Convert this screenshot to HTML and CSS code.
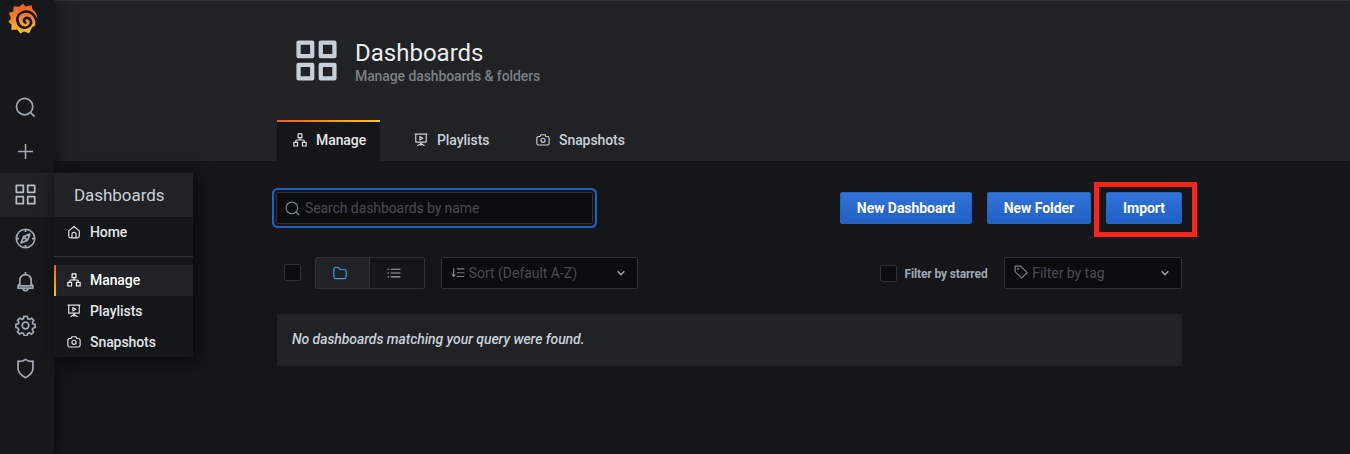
FILE: index.html
```html
<!DOCTYPE html>
<html lang="en">
<head>
<meta charset="utf-8">
<title>Dashboards</title>
<link rel="stylesheet" href="styles.css">
</head>
<body>
<svg class="defs" aria-hidden="true">
  <symbol id="search" viewBox="0 0 24 24"><circle cx="11" cy="11" r="9.300"/><path d="M17.500 17.500l5 5"/></symbol>
  <symbol id="plus" viewBox="0 0 24 24"><path d="M12 2.500v19M2.500 12h19"/></symbol>
  <symbol id="apps" viewBox="0 0 24 24"><path d="M1.500 1.500h8v8h-8zM14.500 1.500h8v8h-8zM1.500 14.500h8v8h-8zM14.500 14.500h8v8h-8z"/></symbol>
  <symbol id="compass" viewBox="0 0 24 24"><circle cx="12" cy="12" r="10.500"/><path d="M17 7l-2.800 7.200L7 17l2.800-7.200zM9.800 9.800l4.400 4.400M12 1.500v3M12 19.500v3M1.500 12h3M19.500 12h3"/></symbol>
  <symbol id="bell" viewBox="0 0 24 24"><path d="M12 1v3M5.500 17v-6.500a6.500 6.500 0 0 1 13 0V17M5.500 14.500L3.500 17v2.500h17V17l-2-2.500M3.500 17h17M9 19.500c.5 4 5.500 4 6 0"/></symbol>
  <symbol id="cog" viewBox="0 0 24 24"><circle cx="12" cy="12" r="3.800"/><path d="M10 1.500h4l.7 2.900 1.600.7 2.600-1.500 2.500 2.500-1.500 2.600.7 1.600 2.400.5v3.500l-2.500.8-.7 1.700 1.500 2.500-2.500 2.600-2.500-1.500-1.700.7-.7 2.400h-3.500l-.8-2.500-1.700-.7-2.500 1.500-2.600-2.500 1.500-2.500-.7-1.700-2.600-.8v-3.600l2.700-.5.700-1.600-1.500-2.600 2.500-2.500 2.600 1.500 1.600-.7z"/></symbol>
  <symbol id="shield" viewBox="0 0 24 24"><path d="M12 1.500c2.500 2 5.500 2.600 8.500 2.200V12c0 5-4 8-8.500 10.500C7.500 20 3.500 17 3.500 12V3.700C6.500 4.100 9.500 3.500 12 1.500z"/></symbol>
  <symbol id="home" viewBox="0 0 24 24"><path d="M3 10l9-7.500 9 7.500v9a3 3 0 0 1-3 3H6a3 3 0 0 1-3-3zM8.500 22v-6a3.500 3.500 0 0 1 7 0v6"/></symbol>
  <symbol id="sitemap" viewBox="0 0 24 24"><path d="M8.700 1.500h6.600V8H8.700zM1.500 16h6.300v6.300H1.500zM16.200 16h6.300v6.300h-6.300zM12 8v4M4.700 16v-2q0-2 2-2h10.600q2 0 2 2v2"/></symbol>
  <symbol id="play" viewBox="0 0 24 24"><path d="M1 2h22M3 2v13.500h18V2M12 15.500V22M6 22l6-4 6 4M10 6l5 3-5 3z"/></symbol>
  <symbol id="camera" viewBox="0 0 24 24"><path d="M4.500 6H7l1.500-3h7L17 6h2.500a3 3 0 0 1 3 3v8.500a3 3 0 0 1-3 3h-15a3 3 0 0 1-3-3V9a3 3 0 0 1 3-3z"/><circle cx="12" cy="12.500" r="3.500"/></symbol>
  <symbol id="folder" viewBox="0 0 24 24"><path d="M4 2.500h5.500L12 6h7.500a3 3 0 0 1 3 3v9.500a3 3 0 0 1-3 3h-15a3 3 0 0 1-3-3V5.500a3 3 0 0 1 2.500-3z"/></symbol>
  <symbol id="list" viewBox="0 0 24 24"><path d="M6.500 5.500H23M6.500 12H23M6.500 18.500H23M1 5.500h2.500M1 12h2.500M1 18.500h2.500"/></symbol>
  <symbol id="sort" viewBox="0 0 24 24"><path d="M10 5H23M10 11.500H23M10 18H23M4.500 4v14M1.500 14.500l3 3.500 3-3.500"/></symbol>
  <symbol id="tag" viewBox="0 0 24 24"><path d="M2 2h9.500L22.500 13 13 22.500 2 11.500z"/><circle cx="7" cy="7" r=".7"/></symbol>
  <symbol id="down" viewBox="0 0 24 24"><path d="M4 8l8 8 8-8"/></symbol>
  <linearGradient id="flame" x1="0" y1="0" x2="0" y2="1"><stop offset="0" stop-color="#f05a2c"/><stop offset=".5" stop-color="#f48530"/><stop offset="1" stop-color="#fbc824"/></linearGradient>
</svg>

<div class="app">
  <nav class="sidebar">
    <a class="logo"><svg viewBox="0 0 90 92">
      <path fill="url(#flame)" d="M45 1l8 9 18-4 2 12q13 9 15 25l-3 6-4 19-9 5-9 17-15-5-11 6-9-11-18 0 1-15L1 56l8-9-6-18 13-4 1-16 17 2z"/>
      <path class="swirl" d="M87 62C84 31 64 24 52 25 35 27 27 39 28 52 30 68 43 76 55 73 67 71 72 59 67 50 63 43 53 42 49 48 46 54 50 59 55 57"/>
    </svg></a>
    <a class="side-item"><svg class="icon"><use href="#search"/></svg></a>
    <a class="side-item"><svg class="icon small"><use href="#plus"/></svg></a>
    <a class="side-item active"><svg class="icon"><use href="#apps"/></svg></a>
    <a class="side-item"><svg class="icon"><use href="#compass"/></svg></a>
    <a class="side-item"><svg class="icon"><use href="#bell"/></svg></a>
    <a class="side-item"><svg class="icon"><use href="#cog"/></svg></a>
    <a class="side-item"><svg class="icon"><use href="#shield"/></svg></a>
    <div class="flyout">
      <div class="flyout-title">Dashboards</div>
      <a class="flyout-item"><svg class="icon"><use href="#home"/></svg>Home</a>
      <div class="divider"></div>
      <a class="flyout-item current"><svg class="icon"><use href="#sitemap"/></svg>Manage</a>
      <a class="flyout-item"><svg class="icon"><use href="#play"/></svg>Playlists</a>
      <a class="flyout-item"><svg class="icon"><use href="#camera"/></svg>Snapshots</a>
    </div>
  </nav>
  <main class="main">
    <header class="page-header">
      <div class="heading">
        <svg class="icon heading-icon"><use href="#apps"/></svg>
        <div><h1 class="title">Dashboards</h1><div class="subtitle">Manage dashboards &amp; folders</div></div>
      </div>
      <div class="tabs">
        <a class="tab selected"><svg class="icon"><use href="#sitemap"/></svg>Manage</a>
        <a class="tab playlists"><svg class="icon"><use href="#play"/></svg>Playlists</a>
        <a class="tab"><svg class="icon"><use href="#camera"/></svg>Snapshots</a>
      </div>
    </header>
    <section class="content">
      <div class="toolbar">
        <label class="search"><svg class="icon"><use href="#search"/></svg><span>Search dashboards by name</span></label>
        <div class="actions">
          <button class="button new-dashboard">New Dashboard</button>
          <button class="button new-folder">New Folder</button>
          <div class="highlight"><button class="button import">Import</button></div>
        </div>
      </div>
      <div class="filters">
        <span class="checkbox"></span>
        <div class="layout-switch">
          <span class="switch on"><svg class="icon"><use href="#folder"/></svg></span>
          <span class="switch"><svg class="icon"><use href="#list"/></svg></span>
        </div>
        <div class="select sort"><svg class="icon"><use href="#sort"/></svg><span>Sort (Default A-Z)</span><svg class="icon arrow"><use href="#down"/></svg></div>
        <span class="checkbox starred-box"></span>
        <span class="starred">Filter by starred</span>
        <div class="select tags"><svg class="icon tag-icon"><use href="#tag"/></svg><span>Filter by tag</span><svg class="icon arrow"><use href="#down"/></svg></div>
      </div>
      <div class="empty">No dashboards matching your query were found.</div>
    </section>
  </main>
</div>
</body>
</html>
```
FILE: styles.css
```css
* { box-sizing: border-box; }
body { margin: 0; background: #141619; color: #c7d0d9; font: 14px/20px Roboto, sans-serif; letter-spacing: -.07px; }
.defs { position: absolute; width: 0; height: 0; }
.app { display: flex; width: 1350px; height: 454px; overflow: hidden; }
.icon { display: block; flex: none; width: 14px; height: 14px; fill: none; stroke: currentColor; stroke-width: 2; stroke-linejoin: round; }

.sidebar { position: relative; z-index: 1; flex: none; width: 54px; background: #17181c; box-shadow: 0 0 16px #0b0c0e; }
.logo { display: block; height: 86px; padding: 3px 0 0 8px; }
.logo svg { display: block; width: 30px; height: 31px; }
.swirl { fill: none; stroke: #17181c; stroke-width: 8; }
.side-item { display: flex; align-items: center; height: 43.5px; padding-left: 15px; color: #9fa7b3; }
.side-item .icon { width: 21px; height: 21px; }
.side-item .small { width: 19px; height: 19px; margin-left: 1px; }
.side-item.active { background: #202226; color: #b4bcc7; }
.flyout { position: absolute; left: 54px; top: 173px; width: 139px; height: 184px; background: #141619; box-shadow: 4px 4px 16px #08090b; }
.flyout-title { height: 44px; padding-left: 20px; background: #202226; font-size: 17px; line-height: 44px; letter-spacing: -.05px; }
.flyout-item { display: flex; align-items: center; gap: 9px; height: 31px; padding: 0 0 1px 13px; color: #e2e4e8; font-weight: 500; }
.divider { height: 1px; margin: 8px 0; background: #303338; }
.flyout-item.current { padding-left: 11px; border-left: 2px solid; border-image: linear-gradient(#f05a28, #fbca0a) 1; background: #202226; color: #fff; }

.main { flex: 1; min-width: 0; }
.page-header { height: 161px; padding: 39px 0 0 223px; border-top: 1px solid #303236; border-bottom: 1px solid #222428; background: #202226; }
.heading { display: flex; height: 80px; padding-left: 19px; }
.heading-icon { width: 41px; height: 41px; margin-right: 18px; stroke-width: 2.500; color: #c7d0d9; }
.title { margin: 0; color: #ececee; font-size: 24px; font-weight: 400; line-height: 26px; letter-spacing: 0; }
.subtitle { color: #7b8087; line-height: 21px; font-weight: 500; letter-spacing: -.09px; }
.tabs { display: flex; height: 41px; }
.tab { display: flex; align-items: center; gap: 9px; padding: 0 0 1px 16px; width: 129px; font-weight: 500; }
.tab.playlists { width: 122px; margin-left: 18px; }
.tab.selected { width: 103px; padding: 0 0 3px 16px; border-top: 2px solid; border-image: linear-gradient(90deg, #f05a28, #fbca0a) 1; background: #141619; color: #e6e6e8; }

.content { width: 905px; margin-left: 223px; }
.toolbar { display: flex; justify-content: space-between; height: 96px; padding-top: 31px; }
.search { display: flex; align-items: center; gap: 5px; width: 317px; height: 32px; margin-left: -1px; padding-left: 8px; border: 1px solid #2c3235; background: #0b0c0e; border-radius: 2px; box-shadow: 0 0 0 2px #141619, 0 0 0 4px #1f60c4; color: #464c54; letter-spacing: -.09px; }
.search .icon { width: 15px; height: 15px; color: #7b8087; }
.actions { display: flex; align-items: flex-start; }
.button { height: 32px; padding: 0; border: 1px solid #2864bf; border-radius: 2px; background: linear-gradient(#3274d9, #1f60c4); color: #fff; font: 700 14px/30px Roboto, sans-serif; letter-spacing: -.05px; }
.new-dashboard { width: 132px; margin-right: 15px; }
.new-folder { width: 104px; }
.highlight { margin: -10px -15px 0 3px; padding: 5px 10px 5px 7px; border: 5px solid #fc2418; }
.import { display: block; width: 76px; margin-bottom: 3px; }
.filters { display: flex; height: 57px; align-items: flex-start; }
.checkbox { width: 17px; height: 17px; margin: 7px 14px 0 7px; border: 1px solid #2c3235; border-radius: 2px; background: #0b0c0e; }
.layout-switch { display: flex; width: 110px; height: 32px; margin-right: 16px; border: 1px solid #2c3235; border-radius: 2px; }
.switch { display: flex; flex: 1; align-items: center; justify-content: center; color: #9fa7b3; }
.switch.on { border-right: 1px solid #2c3235; background: #202226; color: #33a2e5; }
.switch.on .icon { margin-right: 5px; }
.switch:last-child .icon { margin-right: 6px; }
.select { display: flex; align-items: center; gap: 4px; height: 32px; padding: 0 11px 0 9px; border: 1px solid #2c3235; border-radius: 2px; background: #0b0c0e; color: #464c54; }
.select span { letter-spacing: -.03px; }
.select .icon { color: #7b8087; }
.select .tag-icon { margin-bottom: 2px; }
.select .arrow { width: 10px; height: 10px; margin-left: auto; stroke-width: 3.500; color: #9fa7b3; }
.sort { width: 198px; }
.starred-box { margin: 8px 7px 0 242px; }
.starred { width: 100px; padding-top: 7px; color: #9fa7b3; font-size: 12px; font-weight: 700; letter-spacing: -.12px; }
.tags { width: 178px; }
.empty { height: 52px; padding-left: 15px; background: #202226; font-style: italic; font-weight: 500; line-height: 51px; }
```
